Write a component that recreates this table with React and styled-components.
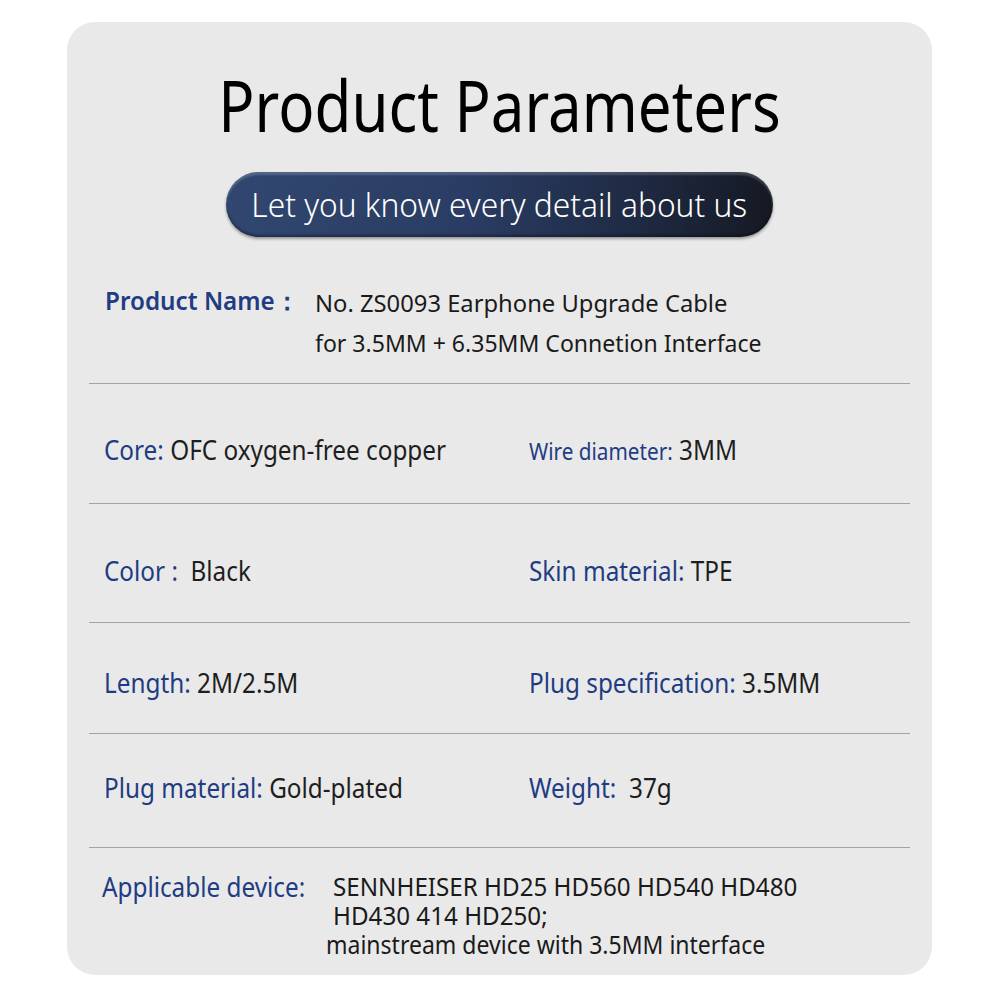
import React from "react";
import styled, { createGlobalStyle } from "styled-components";

const Global = createGlobalStyle`
  html, body { margin: 0; padding: 0; background: #ffffff; }
  body { font-family: "Noto Sans", "Open Sans", sans-serif; }
`;

const Card = styled.div`
  box-sizing: border-box;
  width: 865px;
  height: 953px;
  margin: 22px 0 0 67px;
  background: #e9e9e9;
  border-radius: 28px;
  padding: 48px 22px 0 22px;
  display: flex;
  flex-direction: column;
  align-items: stretch;
`;

const Title = styled.h1`
  margin: 0;
  text-align: center;
  font-family: "Noto Sans", sans-serif;
  font-weight: 400;
  font-size: 71px;
  line-height: 70px;
  color: #000;
  transform: scaleX(0.845);
  transform-origin: 50% 50%;
`;

const PillRow = styled.div`
  display: flex;
  justify-content: center;
  margin-top: 32px;
`;

const Pill = styled.div`
  width: 547px;
  height: 65px;
  border-radius: 33px;
  background: linear-gradient(90deg, #31476f 0%, #2a3c63 45%, #1f2a43 75%, #151923 100%);
  box-shadow: inset 0 3px 2px rgba(255, 255, 255, 0.18), inset 0 -2px 3px rgba(0, 0, 0, 0.35), 0 2px 3px rgba(0, 0, 0, 0.35);
  display: flex;
  align-items: center;
  justify-content: center;
  color: #fff;
  font-family: "Noto Sans", sans-serif;
  font-weight: 300;
  font-size: 33px;
`;

const PillText = styled.span`
  display: inline-block;
  transform: scaleX(0.96);
`;

const Row = styled.div`
  box-sizing: border-box;
  height: ${(p) => p.$h}px;
  padding: ${(p) => p.$pt}px 0 0 15px;
  border-top: 1px solid #a3a3a3;
  display: grid;
  grid-template-columns: 425px 1fr;
  align-items: start;
`;

const FullRow = styled.div`
  box-sizing: border-box;
  height: ${(p) => p.$h}px;
  padding: ${(p) => p.$pt}px 0 0 ${(p) => p.$pl}px;
  border-top: ${(p) => (p.$first ? "none" : "1px solid #a3a3a3")};
  display: flex;
  align-items: flex-start;
`;

const Cell = styled.div`
  font-family: "Noto Sans", sans-serif;
  font-size: 27px;
  line-height: 30px;
  color: #222;
  white-space: nowrap;
  transform: scaleX(${(p) => p.$sx || 0.9});
  transform-origin: 0 50%;
`;

const Label = styled.span`
  color: #213c82;
  font-size: ${(p) => p.$size || 27}px;
  font-weight: ${(p) => p.$weight || 400};
`;

const Value = styled.span`
  color: #1e1e1e;
`;

const PNLabel = styled.div`
  width: ${(p) => p.$w}px;
  flex: none;
  font-family: "Noto Sans", sans-serif;
  font-size: ${(p) => p.$size}px;
  font-weight: ${(p) => p.$weight};
  line-height: ${(p) => p.$lh}px;
  color: #213c82;
  white-space: nowrap;
`;

const LabelText = styled.span`
  display: inline-block;
  transform: scaleX(${(p) => p.$sx});
  transform-origin: 0 50%;
`;

const Lines = styled.div`
  display: flex;
  flex-direction: column;
  align-items: flex-start;
  font-family: "Noto Sans", sans-serif;
  font-size: ${(p) => p.$size}px;
  line-height: ${(p) => p.$lh}px;
  color: #1a1a1a;
  white-space: nowrap;
`;

const Line = styled.span`
  display: inline-block;
  margin-left: ${(p) => p.$indent || 0}px;
  transform: scaleX(${(p) => p.$sx || 1});
  transform-origin: 0 50%;
`;

export default function App() {
  return (
    <>
      <Global />
      <Card>
        <Title>Product Parameters</Title>
        <PillRow>
          <Pill>
            <PillText>Let you know every detail about us</PillText>
          </Pill>
        </PillRow>
        <FullRow $first $h={146} $pt={46} $pl={16}>
          <PNLabel $w={210} $size={25} $weight={600} $lh={34}>
            <LabelText $sx={0.97}>Product Name：</LabelText>
          </PNLabel>
          <Lines $size={24} $lh={40}>
            <Line $sx={0.99}>No. ZS0093 Earphone Upgrade Cable</Line>
            <Line $sx={0.96}>for 3.5MM + 6.35MM Connetion Interface</Line>
          </Lines>
        </FullRow>
        <Row $h={120} $pt={51}>
          <Cell>
            <Label>Core:</Label> <Value>OFC oxygen-free copper</Value>
          </Cell>
          <Cell $sx={0.9}>
            <Label $size={23}>Wire diameter:</Label> <Value>3MM</Value>
          </Cell>
        </Row>
        <Row $h={119} $pt={52}>
          <Cell>
            <Label>Color :</Label>&nbsp; <Value>Black</Value>
          </Cell>
          <Cell>
            <Label>Skin material:</Label> <Value>TPE</Value>
          </Cell>
        </Row>
        <Row $h={111} $pt={45}>
          <Cell>
            <Label>Length:</Label> <Value>2M/2.5M</Value>
          </Cell>
          <Cell>
            <Label>Plug specification:</Label> <Value>3.5MM</Value>
          </Cell>
        </Row>
        <Row $h={114} $pt={39}>
          <Cell>
            <Label>Plug material:</Label> <Value>Gold-plated</Value>
          </Cell>
          <Cell>
            <Label>Weight:</Label>&nbsp; <Value>37g</Value>
          </Cell>
        </Row>
        <FullRow $h={128} $pt={24} $pl={13}>
          <PNLabel $w={231} $size={27} $weight={400} $lh={29}>
            <LabelText $sx={0.9}>Applicable device:</LabelText>
          </PNLabel>
          <Lines $size={26} $lh={29}>
            <Line $sx={0.93}>SENNHEISER HD25 HD560 HD540 HD480</Line>
            <Line $sx={0.93}>HD430 414 HD250;</Line>
            <Line $sx={0.885} $indent={-7}>mainstream device with 3.5MM interface</Line>
          </Lines>
        </FullRow>
      </Card>
    </>
  );
}
